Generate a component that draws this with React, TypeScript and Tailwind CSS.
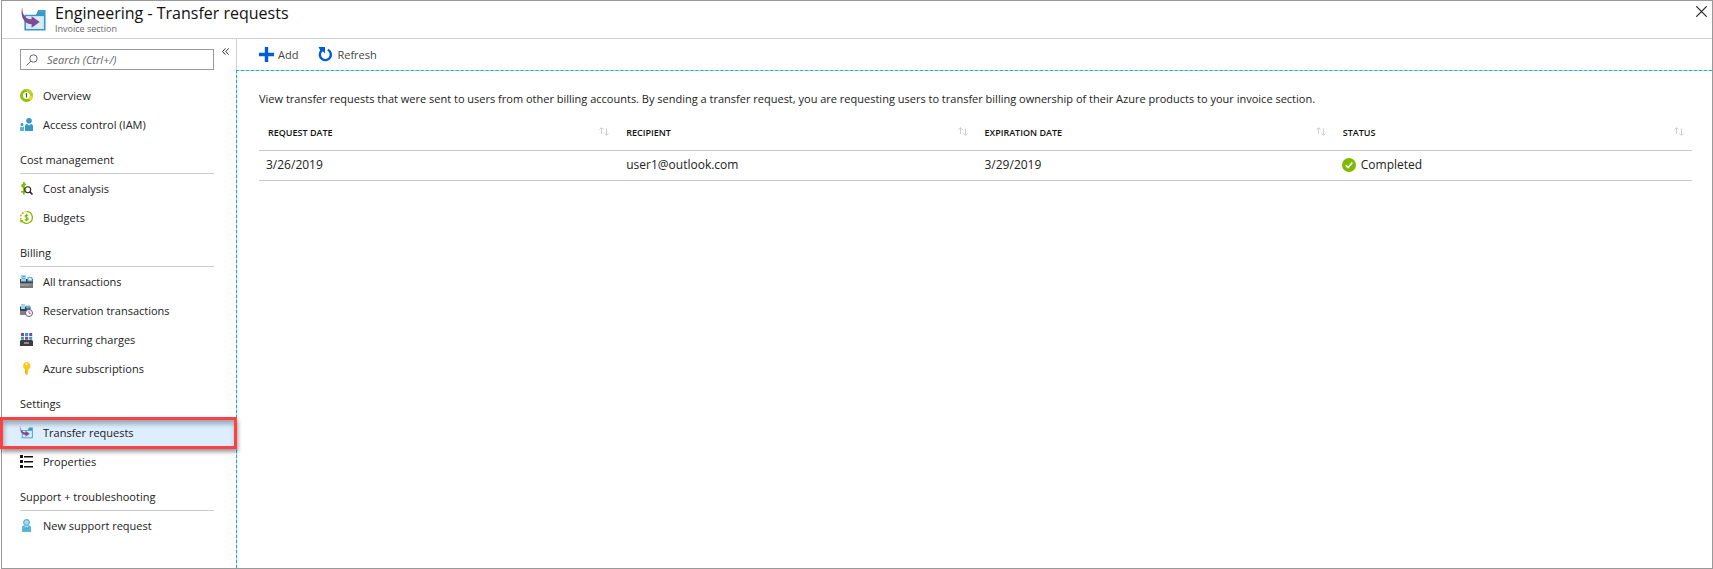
import type { ReactNode } from 'react';

const icon = 'size-[13px] shrink-0';

function FolderIcon({ className }: { className: string }) {
  return (
    <svg viewBox="0 0 26 26" className={className} aria-hidden="true">
      <path d="M3.500 8h12l2.500-5h7.500v21.500h-22z" fill="#3999c6" />
      <path d="M18.500 5.200l.8-1.400h5v1.400z" fill="#59b4d9" opacity=".5" />
      <path d="M5.200 9.500h18.600v13.300H5.200z" fill="#d9ecf6" />
      <path d="M1.500 0C1 7 4 12.500 11 12.800V9.500l8.500 6-8.500 6v-3.600C3 17.800-1.500 9 1.500 0z" fill="#804998" />
    </svg>
  );
}

function OverviewIcon() {
  return (
    <svg viewBox="0 0 13 13" className={icon} aria-hidden="true">
      <circle cx="6.500" cy="6.500" r="5" fill="#fff" stroke="#8cc400" strokeWidth="3" />
      <path d="M6.500 1.500a5 5 0 0 1 4.800 4" fill="none" stroke="#b8d432" strokeWidth="3" />
      <path d="M11.500 6.500a5 5 0 0 1-2 4" fill="none" stroke="#fcd116" strokeWidth="3" />
      <path d="M5.600 5.100l1-.6v4" fill="none" stroke="#333" />
    </svg>
  );
}

function AccessIcon() {
  return (
    <svg viewBox="0 0 13 13" className={icon} fill="#3999c6" aria-hidden="true">
      <circle cx="9" cy="2.800" r="2.800" />
      <path d="M5 13V8.200C5 7 5.800 6 7 6l2 1.600L11 6c1.200 0 2 1 2 2.200V13z" />
      <circle cx="2" cy="6.600" r="1.500" />
      <path d="M0 13V9.800C0 9 .6 8.600 1.200 8.600L2.300 9.400l1-.8H4V13z" fill="#59b4d9" />
    </svg>
  );
}

function CostIcon() {
  return (
    <svg viewBox="0 0 13 13" className={icon} fill="none" aria-hidden="true">
      <path d="M6 2.700C4.500 1.800 2 2 2 3.700c0 2 4 1.800 4 4.200C6 10 3 10.400 1.200 9.400M3.900 0v12.500" stroke="#7fba00" strokeWidth="1.700" />
      <circle cx="7.700" cy="7.700" r="3" fill="#fff" fillOpacity=".6" stroke="#222" strokeWidth="1.100" />
      <path d="M9.900 9.900L12.500 12.500" stroke="#222" strokeWidth="1.500" />
    </svg>
  );
}

function BudgetIcon() {
  return (
    <svg viewBox="0 0 13 13" className={icon} fill="none" aria-hidden="true">
      <path d="M6.500.7a5.800 5.800 0 1 1-5 8.700" stroke="#7fba00" strokeWidth="1.200" />
      <path d="M1 8.500A5.800 5.800 0 0 1 5.500.8" stroke="#f09609" strokeWidth="1.500" strokeDasharray="1.800 1.300" />
      <path d="M0 9h3.200L.8 12z" fill="#7fba00" />
      <path d="M8.200 4.500C7 3.600 5 3.900 5 5.200c0 1.400 3.200 1.100 3.200 2.600C8.200 9.200 6 9.400 4.700 8.500M6.600 2.800v7.400" stroke="#7fba00" strokeWidth="1.100" />
    </svg>
  );
}

function RegisterIcon() {
  return (
    <svg viewBox="0 0 13 13" className={icon} aria-hidden="true">
      <path d="M0 4h13v5H0z" fill="#36454f" />
      <path d="M1 0h5v6.500H1z" fill="#9bd3f0" />
      <path d="M2 1.500h3M2 3.500h3" stroke="#59b4d9" />
      <path d="M7.500 2H12.500v4.500h-5z" fill="#59b4d9" />
      <path d="M8.500 3h3v2.300h-3z" fill="#d9f0fa" />
      <path d="M0 8.500h13V13H0z" fill="#7a7a7a" />
      <path d="M0 8.500h13L8 11H0z" fill="#999" />
    </svg>
  );
}

function ReservationIcon() {
  return (
    <svg viewBox="0 0 13 13" className={icon} aria-hidden="true">
      <path d="M0 2.500h10.500V7H0z" fill="#36454f" />
      <path d="M1 0h4v5H1z" fill="#9bd3f0" />
      <path d="M6.200 1.500h3.600v3H6.200z" fill="#59b4d9" />
      <path d="M0 7h8v4H0z" fill="#808080" />
      <circle cx="9" cy="9" r="3.500" fill="#fff" stroke="#804998" />
      <path d="M9 6.800V9.300h1.700" fill="none" stroke="#555" strokeWidth=".8" />
    </svg>
  );
}

function RecurringIcon() {
  return (
    <svg viewBox="0 0 13 13" className={icon} aria-hidden="true">
      <path d="M1 0h3v3H1zM9.200 0h3v3h-3zM5 3.800h3.200v3H5z" fill="#804998" />
      <path d="M5 0h3.200v3H5zM1 3.800h3v3H1zM9.200 3.800h3v3h-3z" fill="#3999c6" />
      <path d="M0 8l1-1h11l1 1v5H0z" fill="#3e3e3e" />
      <path d="M4 9.500h5v1H4z" fill="#ddd" />
    </svg>
  );
}

function KeyIcon() {
  return (
    <svg viewBox="0 0 13 13" className={icon} aria-hidden="true">
      <path d="M6.500 0a4 4 0 0 1 2 7.400V8.500l-1 .8 1 .9-1 .9.8.8-1.500 1.100-1.800-1.300V7.400A4 4 0 0 1 6.500 0z" fill="#fcc91b" />
      <circle cx="6.500" cy="2.200" r="1" fill="#fff" />
      <path d="M6 7.500v4" stroke="#e8a400" strokeWidth=".8" />
    </svg>
  );
}

function ListIcon() {
  return (
    <svg viewBox="0 0 13 13" className={icon} aria-hidden="true">
      <path d="M0 0h3v3H0zM0 5h3v3H0zM0 10h3v3H0zM4 1h9v1.500H4zM4 6h9v1.500H4zM4 11h9v1.500H4z" fill="#111" />
    </svg>
  );
}

function SupportIcon() {
  return (
    <svg viewBox="0 0 13 13" className={icon} aria-hidden="true">
      <path d="M2 7.500l2-1.300h5l2 1.300V13H2z" fill="#59b4d9" />
      <path d="M4 6l2.500 4L9 6z" fill="#b8e0f2" />
      <circle cx="6.500" cy="3.500" r="2.800" fill="#a8d8ee" stroke="#59b4d9" strokeWidth="1.200" />
      <circle cx="6.500" cy="9" r=".8" fill="#2b7fa8" />
    </svg>
  );
}

type Item = { label: string; icon: ReactNode; selected?: boolean };
type Group = { title?: string; items: Item[] };

const groups: Group[] = [
  {
    items: [
      { label: 'Overview', icon: <OverviewIcon /> },
      { label: 'Access control (IAM)', icon: <AccessIcon /> },
    ],
  },
  {
    title: 'Cost management',
    items: [
      { label: 'Cost analysis', icon: <CostIcon /> },
      { label: 'Budgets', icon: <BudgetIcon /> },
    ],
  },
  {
    title: 'Billing',
    items: [
      { label: 'All transactions', icon: <RegisterIcon /> },
      { label: 'Reservation transactions', icon: <ReservationIcon /> },
      { label: 'Recurring charges', icon: <RecurringIcon /> },
      { label: 'Azure subscriptions', icon: <KeyIcon /> },
    ],
  },
  {
    title: 'Settings',
    items: [
      { label: 'Transfer requests', icon: <FolderIcon className={icon} />, selected: true },
      { label: 'Properties', icon: <ListIcon /> },
    ],
  },
  {
    title: 'Support + troubleshooting',
    items: [{ label: 'New support request', icon: <SupportIcon /> }],
  },
];

function NavItem({ item }: { item: Item }) {
  return (
    <li className="relative">
      <a
        href="#"
        aria-current={item.selected ? 'page' : undefined}
        className={`flex h-[29px] items-center gap-[10px] pl-[18px] text-[#222] ${item.selected ? 'bg-[#ddeeff]' : ''}`}
      >
        {item.icon}
        {item.label}
      </a>
      {item.selected && (
        <span className="pointer-events-none absolute -top-px -right-px -bottom-[2px] -left-[2px] z-10 border-3 border-[#fb4143] shadow-[1px_3px_4px_rgba(0,0,0,0.4),inset_1px_4px_5px_rgba(0,0,0,0.3)]" />
      )}
    </li>
  );
}

function SortIcon() {
  return (
    <svg viewBox="0 0 10 9" className="mt-[2px] h-[9px] w-[10px]" fill="none" stroke="#c8c8c8" aria-hidden="true">
      <path d="M2.500 7V.7M.5 2.700l2-2 2 2M7.500 1.500v6.800M5.500 6.300l2 2 2-2" strokeWidth=".9" />
    </svg>
  );
}

const columns = ['REQUEST DATE', 'RECIPIENT', 'EXPIRATION DATE', 'STATUS'];

export default function App() {
  return (
    <div className="min-h-screen bg-white pl-px font-['Open_Sans','Noto_Sans',sans-serif] text-[11px] leading-4 text-[#222]">
      <div className="flex min-h-screen flex-col border border-[#999]">
        <header className="flex h-[38px] items-start border-b border-[#d0d0d0]">
          <FolderIcon className="mt-[6px] ml-[19px] size-[25px]" />
          <div className="ml-[9px] grow">
            <h1 className="mt-[2px] text-[16px] leading-5 font-normal text-[#111]">Engineering - Transfer requests</h1>
            <p className="text-[9px] leading-3 text-[#666]">Invoice section</p>
          </div>
          <button type="button" aria-label="Close" className="mt-[5px] mr-[5px]">
            <svg viewBox="0 0 11 11" className="size-[11px]" stroke="#222" strokeWidth="1.200" aria-hidden="true">
              <path d="M.3.3l10.400 10.400M10.700.3L.3 10.700" />
            </svg>
          </button>
        </header>

        <div className="flex grow">
          <nav aria-label="Invoice section" className="w-[234px] shrink-0">
            <div className="flex items-start pt-[10px] pl-[18px]">
              <label className="flex h-[21px] w-[194px] items-center gap-[9px] border border-[#999] pl-[5px]">
                <svg viewBox="0 0 12 12" className="size-3 shrink-0" fill="none" stroke="#666" aria-hidden="true">
                  <circle cx="7.500" cy="4.500" r="3.700" />
                  <path d="M4.800 7.200L.5 11.500" />
                </svg>
                <input
                  type="text"
                  aria-label="Search"
                  placeholder="Search (Ctrl+/)"
                  className="w-full min-w-0 bg-transparent text-[11px] italic outline-none placeholder:text-[#666]"
                />
              </label>
              <button type="button" aria-label="Collapse menu" className="ml-[8px]">
                <svg viewBox="0 0 7 7" className="-mt-px size-[7px]" fill="none" stroke="#333" aria-hidden="true">
                  <path d="M3.400.4L.6 3.500l2.800 3.100M6.600.4L3.800 3.500l2.800 3.100" />
                </svg>
              </button>
            </div>
            <div className="pt-[11px]">
              {groups.map((group, i) => (
                <section key={i}>
                  {group.title && (
                    <h2 className="mr-[22px] ml-[18px] flex h-[35px] items-end border-b border-[#ccc] pb-[5px] text-[#222]">
                      {group.title}
                    </h2>
                  )}
                  <ul>
                    {group.items.map((item) => (
                      <NavItem key={item.label} item={item} />
                    ))}
                  </ul>
                </section>
              ))}
            </div>
          </nav>

          <main className="flex min-w-0 grow flex-col">
            <div className="flex h-[31px] items-center gap-5 border-l border-[#d0d0d0] pl-[22px] text-[#444]">
              <button type="button" className="flex items-center gap-1">
                <svg viewBox="0 0 15 15" className="size-[15px]" fill="#015cda" aria-hidden="true">
                  <path d="M5.800 0h3.400v5.800H15v3.400H9.200V15H5.800V9.200H0V5.800h5.800z" />
                </svg>
                Add
              </button>
              <button type="button" className="flex items-center gap-1">
                <svg viewBox="0 0 15 15" className="size-[15px]" aria-hidden="true">
                  <path d="M9.800 2.700a5.500 5.500 0 1 1-6.300 1" fill="none" stroke="#015cda" strokeWidth="2.400" />
                  <path d="M.5 0H7v6.500L5 4.600H2.800z" fill="#015cda" />
                </svg>
                Refresh
              </button>
            </div>
            <div className="flex grow flex-col border-t border-l border-dashed border-[#00b7f1] bg-[#d0d0d0]">
              <div className="grow bg-white pr-[20px] pl-[22px]">
                <p className="mt-[20px]">
                  View transfer requests that were sent to users from other billing accounts. By sending a transfer
                  request, you are requesting users to transfer billing ownership of their Azure products to your
                  invoice section.
                </p>
                <table className="mt-[6px] w-full table-fixed border-collapse text-left">
                  <thead>
                    <tr className="h-[37px] border-b border-[#c8c8c8]">
                      {columns.map((name) => (
                        <th key={name} scope="col" className="pt-1 pr-[8px] pl-[9px] text-[9px] font-semibold text-[#111]">
                          <div className="flex items-start justify-between">
                            {name}
                            <SortIcon />
                          </div>
                        </th>
                      ))}
                    </tr>
                  </thead>
                  <tbody className="text-[12px]">
                    <tr className="h-[30px] border-b border-[#c8c8c8]">
                      <td className="pl-[7px]">3/26/2019</td>
                      <td className="pl-[9px]">user1@outlook.com</td>
                      <td className="pl-[9px]">3/29/2019</td>
                      <td className="pl-[8px]">
                        <span className="flex items-center gap-[5px]">
                          <svg viewBox="0 0 14 14" className="size-[14px]" aria-hidden="true">
                            <circle cx="7" cy="7" r="7" fill="#7fba00" />
                            <path d="M3.700 7.200l2.400 2.400 4.300-5" fill="none" stroke="#fff" strokeWidth="1.500" />
                          </svg>
                          Completed
                        </span>
                      </td>
                    </tr>
                  </tbody>
                </table>
              </div>
            </div>
          </main>
        </div>
      </div>
    </div>
  );
}
